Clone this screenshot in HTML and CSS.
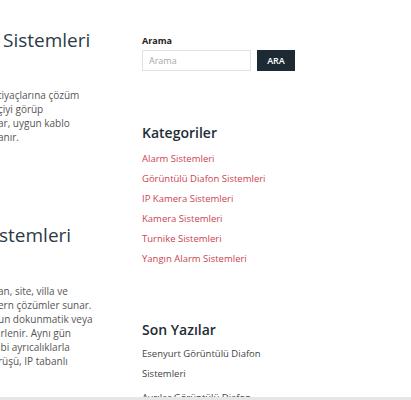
FILE: index.html
```html
<!DOCTYPE html>
<html lang="tr">
<head>
<meta charset="utf-8">
<link rel="stylesheet" href="styles.css">
</head>
<body>
<div class="viewport">
  <div class="page">
    <main class="content">
      <section class="post">
        <h2 class="post-title">Sistemleri</h2>
        <p class="post-text">tiyaçlarına çözüm<br>çiyi görüp<br>ar, uygun kablo<br>anır.</p>
      </section>
      <section class="post">
        <h2 class="post-title post-title--cut">stemleri</h2>
        <p class="post-text">an, site, villa ve<br>ern çözümler sunar.<br>un dokunmatik veya<br>irlenir. Aynı gün<br>ibi ayrıcalıklarla<br>rüşü, IP tabanlı</p>
      </section>
    </main>
    <aside class="sidebar">
      <div class="widget widget--search">
        <label class="search-label" for="s">Arama</label>
        <form class="search-form">
          <input id="s" class="search-input" type="text" placeholder="Arama">
          <button class="search-btn" type="button">ARA</button>
        </form>
      </div>
      <div class="widget widget--cats">
        <h3 class="widget-title">Kategoriler</h3>
        <ul class="link-list">
          <li><a href="#">Alarm Sistemleri</a></li>
          <li><a href="#">Görüntülü Diafon Sistemleri</a></li>
          <li><a href="#">IP Kamera Sistemleri</a></li>
          <li><a href="#">Kamera Sistemleri</a></li>
          <li><a href="#">Turnike Sistemleri</a></li>
          <li><a href="#">Yangın Alarm Sistemleri</a></li>
        </ul>
      </div>
      <div class="widget widget--recent">
        <h3 class="widget-title">Son Yazılar</h3>
        <ul class="post-list">
          <li><a href="#">Esenyurt Görüntülü Diafon Sistemleri</a></li>
          <li><a href="#">Avcılar Görüntülü Diafon Sistemleri</a></li>
        </ul>
      </div>
    </aside>
  </div>
</div>
<div class="bottom-bar"></div>
</body>
</html>
```
FILE: styles.css
```css
* { box-sizing: border-box; }
html, body { margin: 0; padding: 0; }
body {
  width: 411px;
  height: 400px;
  overflow: hidden;
  background: #ffffff;
  font-family: "Open Sans", "Liberation Sans", sans-serif;
  color: #555;
}
.viewport {
  height: 397px;
  overflow: hidden;
}
.page {
  display: flex;
}
.content {
  width: 142px;
  flex: none;
  overflow: hidden;
}
.post-title {
  margin: 0;
  padding-left: 3px;
  font-size: 19px;
  font-weight: 400;
  line-height: 28px;
  color: #2c3a45;
  white-space: nowrap;
}
.post-title--cut { padding-left: 0; margin-left: -1px; }
.post:first-child { padding-top: 26px; }
.post:first-child .post-text { margin-top: 34px; }
.post + .post { margin-top: 77px; }
.post + .post .post-text { margin-top: 35px; }
.post-text {
  margin: 0;
  margin-left: -2px;
  font-size: 10px;
  line-height: 14px;
  color: #555;
  white-space: nowrap;
}
.sidebar {
  width: 160px;
  flex: none;
  padding-top: 35px;
}
.search-label {
  display: block;
  font-size: 9px;
  font-weight: 700;
  line-height: 12px;
  color: #222;
}
.search-form {
  display: flex;
  gap: 6px;
  margin-top: 3px;
}
.search-input {
  width: 109px;
  height: 21px;
  border: 1px solid #e2e2e2;
  padding: 0 6px;
  font-family: inherit;
  font-size: 9px;
  color: #555;
  outline: none;
}
.search-input::placeholder { color: #a8a8a8; }
.search-btn {
  width: 38px;
  height: 21px;
  border: 0;
  background: #1e2a33;
  color: #fff;
  font-family: inherit;
  font-size: 9px;
  font-weight: 600;
  padding: 0;
}
.widget--cats { margin-top: 53px; }
.widget-title {
  margin: 0;
  font-size: 14px;
  font-weight: 600;
  line-height: 18px;
  color: #222d36;
}
.link-list, .post-list {
  list-style: none;
  margin: 0;
  padding: 0;
}
.link-list { margin-top: 7px; }
.link-list li { font-size: 9.5px; line-height: 20px; }
.link-list a {
  color: #cc4350;
  text-decoration: none;
}
.widget--recent { margin-top: 52px; }
.post-list { margin-top: 5px; width: 145px; }
.post-list li { font-size: 9.5px; line-height: 20px; margin-bottom: 4px; }
.post-list a { color: #444; text-decoration: none; }
.bottom-bar {
  height: 3px;
  background: #e6e6e6;
}
```
